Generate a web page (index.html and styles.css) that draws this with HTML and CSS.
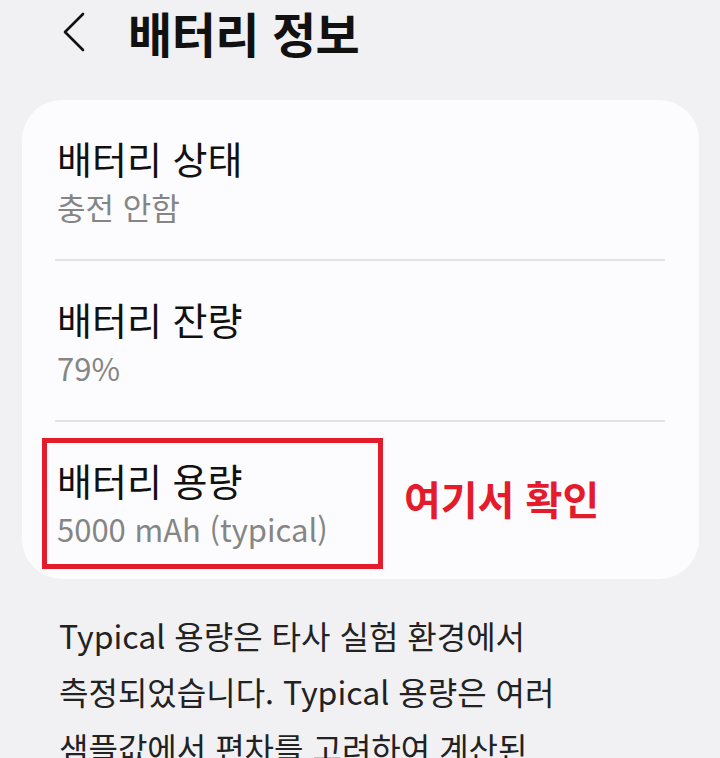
FILE: index.html
```html
<!DOCTYPE html>
<html lang="ko">
<head>
<meta charset="UTF-8">
<title>배터리 정보</title>
<link rel="stylesheet" href="styles.css">
</head>
<body>
  <div class="header">
    <svg class="back" width="26" height="40" viewBox="0 0 26 40">
      <polyline points="22,2 4,20 22,38" fill="none" stroke="#111" stroke-width="2.6" stroke-linecap="round" stroke-linejoin="round"/>
    </svg>
    <h1 class="title">배터리 정보</h1>
  </div>

  <div class="card">
    <div class="row">
      <div class="row-title">배터리 상태</div>
      <div class="row-sub">충전 안함</div>
    </div>
    <div class="divider"></div>
    <div class="row">
      <div class="row-title">배터리 잔량</div>
      <div class="row-sub">79%</div>
    </div>
    <div class="divider"></div>
    <div class="row row-last">
      <div class="row-title">배터리 용량</div>
      <div class="row-sub">5000 mAh (typical)</div>
      <div class="highlight"></div>
      <div class="note">여기서 확인</div>
    </div>
  </div>

  <p class="footnote">Typical 용량은 타사 실험 환경에서 측정되었습니다. Typical 용량은 여러 샘플값에서 편차를 고려하여 계산된 평균값입니다.</p>
</body>
</html>
```

FILE: styles.css
```css
* {
  box-sizing: border-box;
}

body {
  margin: 0;
  background-color: #f1f1f3;
  font-family: "Noto Sans CJK KR", "Noto Sans", sans-serif;
  color: #111;
  overflow: hidden;
}

.header {
  display: flex;
  align-items: center;
  height: 64px;
  padding-left: 61px;
}

.back {
  flex: none;
}

.title {
  margin: 0 0 0 41px;
  font-size: 48px;
  font-weight: 700;
  letter-spacing: -0.5px;
  line-height: 64px;
}

.card {
  margin: 36px 21px 0 22px;
  background-color: #fcfcfe;
  border-radius: 40px;
}

.row {
  padding: 36px 35px 29px 35px;
}

.row-last {
  position: relative;
  padding-bottom: 27px;
}

.row-title {
  font-size: 38px;
  line-height: 44px;
}

.row-sub {
  margin-top: 4px;
  font-size: 31px;
  line-height: 46px;
  color: #858585;
}

.divider {
  height: 2px;
  margin: 0 34px 0 33px;
  background-color: #e3e3e6;
}

.highlight {
  position: absolute;
  left: 20px;
  top: 16px;
  width: 341px;
  height: 131px;
  border: 5px solid #e31b2b;
}

.note {
  position: absolute;
  left: 382px;
  top: 50px;
  font-size: 40px;
  font-weight: 700;
  line-height: 52px;
  color: #e31b2b;
}

.footnote {
  margin: 28px 59px 0 59px;
  font-size: 32px;
  line-height: 56px;
  color: #222;
  word-break: keep-all;
}
```
